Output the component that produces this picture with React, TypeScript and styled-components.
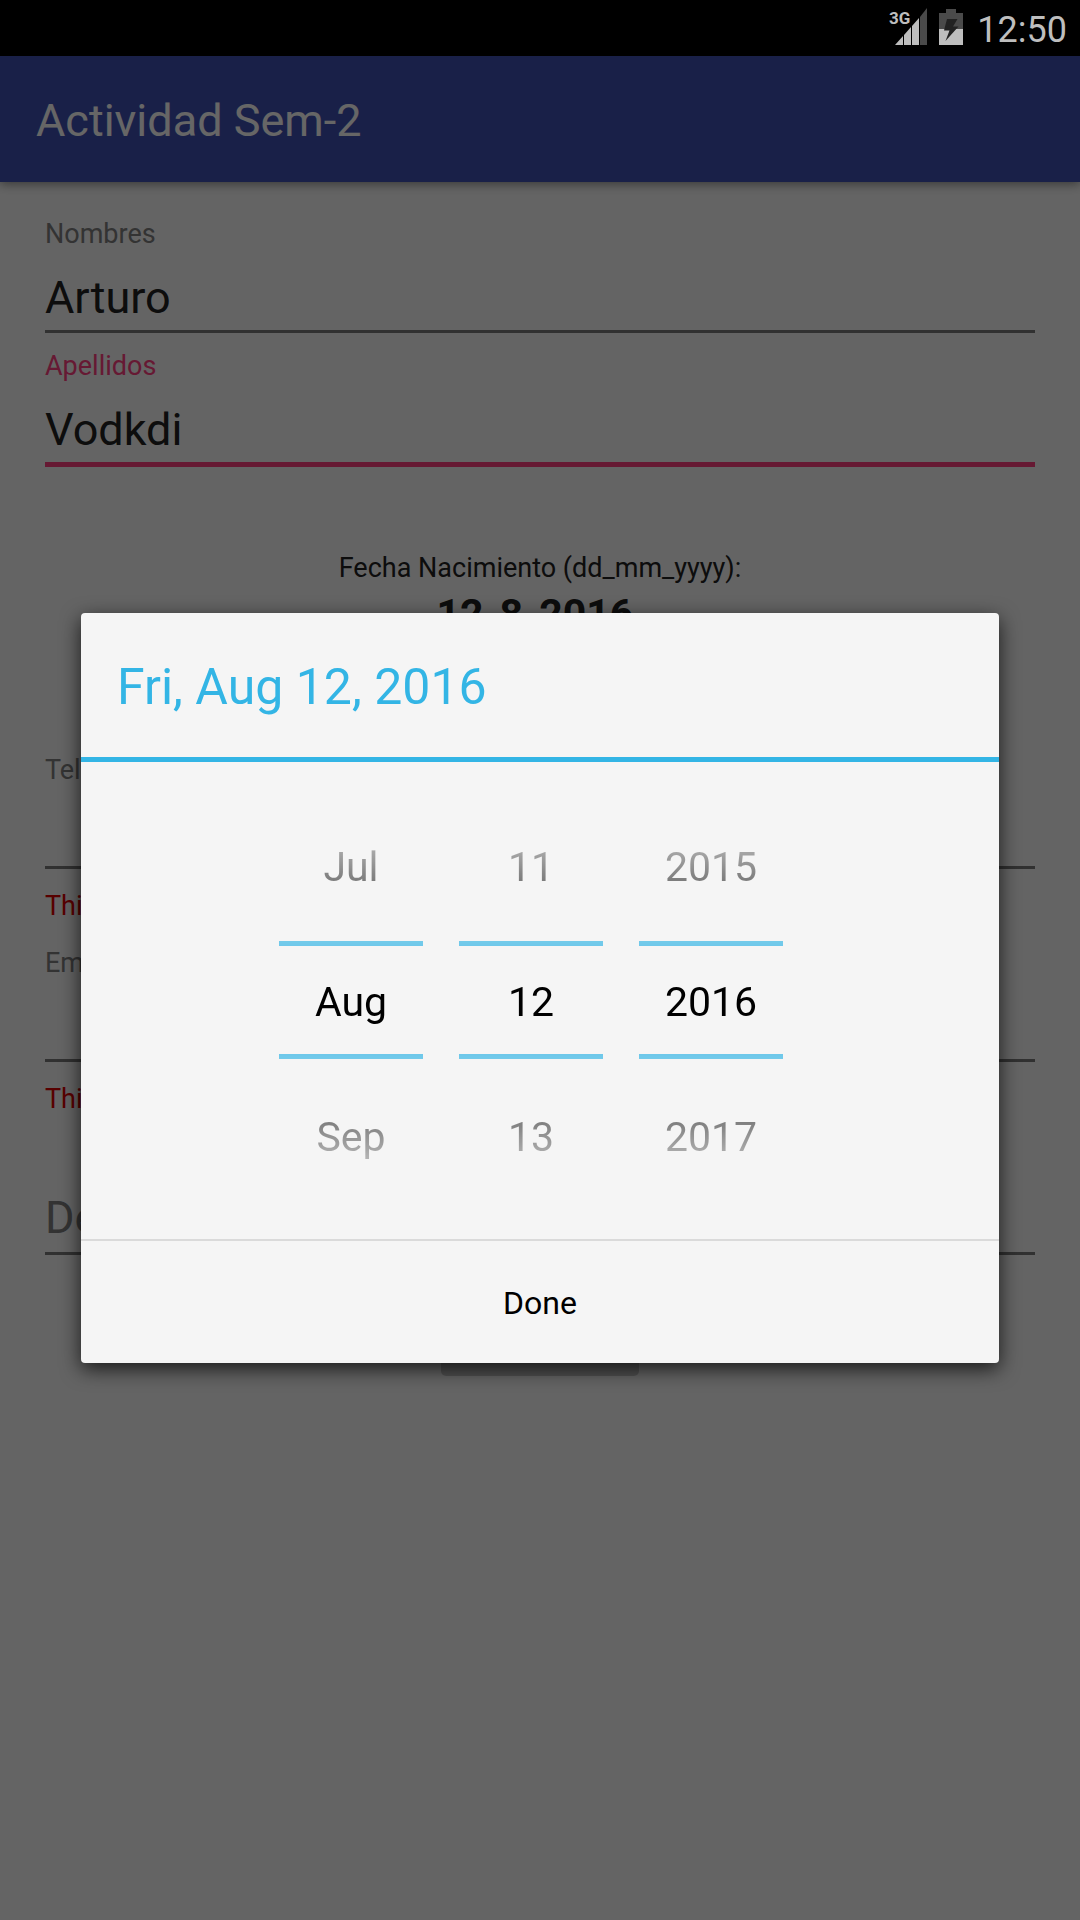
import React, { useState } from "react";
import styled, { createGlobalStyle } from "styled-components";

const GlobalStyle = createGlobalStyle`
  *, *::before, *::after { box-sizing: border-box; }
  body {
    margin: 0;
    background: #fafafa;
    font-family: Roboto, "Noto Sans", sans-serif;
  }
  input, button { font: inherit; }
`;

const Screen = styled.div`
  position: relative;
  display: flex;
  flex-direction: column;
  min-height: 100vh;
  background: #fafafa;
`;

const StatusBar = styled.header`
  display: flex;
  align-items: center;
  justify-content: flex-end;
  height: 56px;
  padding: 0 13px;
  background: #000;
  color: #bebebe;
  font-size: 36px;
`;

const StatusIcon = styled.svg`
  display: block;
  flex: none;
  height: 56px;
  margin-right: 12px;
`;

const Clock = styled.time`
  margin-left: 2px;
  padding-top: 4px;
  line-height: 52px;
`;

const Window = styled.div`
  position: relative;
  flex: 1;
  display: flex;
  flex-direction: column;
`;

const AppBar = styled.div`
  display: flex;
  align-items: center;
  height: 126px;
  padding: 3px 36px 0;
  background: #3f51b5;
  box-shadow: 0 2px 10px rgba(0, 0, 0, 0.45);
`;

const AppTitle = styled.h1`
  margin: 0;
  color: #fff;
  font-size: 45px;
  font-weight: 400;
  line-height: 56px;
`;

const Form = styled.form`
  display: flex;
  flex-direction: column;
  padding: 35px 45px;
`;

const Field = styled.div<{ $unlabelled?: boolean }>`
  display: flex;
  flex-direction: column;
  margin-bottom: 16px;
  padding-top: ${(p) => (p.$unlabelled ? 34 : 0)}px;
`;

const Label = styled.label<{ $active?: boolean }>`
  color: ${(p) => (p.$active ? "#ff4081" : "#808080")};
  font-size: 27px;
  line-height: 34px;
`;

const TextInput = styled.input<{ $active?: boolean }>`
  width: 100%;
  height: ${(p) => (p.$active ? 84 : 82)}px;
  padding: 14px 0 0;
  border: 0;
  border-bottom: ${(p) => (p.$active ? "5px solid #ff4081" : "3px solid #7a7a7a")};
  border-radius: 0;
  outline: 0;
  background: transparent;
  color: #212121;
  font-size: 45px;

  &::placeholder { color: #808080; opacity: 1; }
  &:placeholder-shown { padding: 9px 0 0; }
`;

const FieldError = styled.p`
  margin: 20px 0 7px;
  color: #dd0000;
  font-size: 27px;
  line-height: 34px;
`;

const BirthDate = styled.div`
  display: flex;
  flex-direction: column;
  align-items: center;
  gap: 5px;
  padding: 68px 0 115px;
  color: #212121;
`;

const BirthLabel = styled.span`
  font-size: 27px;
  line-height: 34px;
`;

const BirthValue = styled.strong`
  font-size: 41px;
  line-height: 48px;
  white-space: pre;
`;

const SubmitButton = styled.button`
  align-self: center;
  width: 198px;
  height: 100px;
  margin-top: 5px;
  border: 0;
  border-radius: 5px;
  background: #c8c9c9;
`;

const Scrim = styled.div`
  position: absolute;
  inset: 0;
  display: flex;
  align-items: center;
  justify-content: center;
  padding: 0 81px;
  background: rgba(0, 0, 0, 0.6);
`;

const Dialog = styled.section`
  flex: 1;
  overflow: hidden;
  border-radius: 4px;
  background: #f5f5f5;
  box-shadow: 0 6px 20px rgba(0, 0, 0, 0.75);
`;

const DialogTitle = styled.h2`
  margin: 0;
  padding: 42px 36px 38px;
  border-bottom: 5px solid #33b5e5;
  color: #33b5e5;
  font-size: 50px;
  font-weight: 400;
  line-height: 64px;
`;

const Pickers = styled.div`
  display: flex;
  justify-content: center;
  gap: 36px;
  padding: 36px 18px 36px 0;
`;

const Picker = styled.div`
  display: flex;
  flex-direction: column;
  width: 144px;
  font-size: 41px;
  mask-image: linear-gradient(
    transparent,
    #000 168px,
    #000 calc(100% - 168px),
    transparent
  );
`;

const Step = styled.button<{ $after?: boolean }>`
  height: ${(p) => (p.$after ? 144 : 143)}px;
  padding: ${(p) => (p.$after ? "12px 0 0" : "0 0 6px")};
  border: 0;
  background: none;
  color: #000;
`;

const PickerValue = styled.input`
  width: 100%;
  height: 118px;
  padding: 4px 0 0;
  border: solid #5cc2e8;
  border-width: 5px 0;
  outline: 0;
  background: transparent;
  color: #000;
  text-align: center;
`;

const DoneButton = styled.button`
  display: block;
  width: 100%;
  height: 124px;
  padding: 2px 0 0;
  border: 0;
  border-top: 2px solid #dadada;
  background: none;
  color: #000;
  font-size: 32px;
`;

const MONTHS = ["Jan", "Feb", "Mar", "Apr", "May", "Jun", "Jul", "Aug", "Sep", "Oct", "Nov", "Dec"];

const NetworkLabel = styled.text`
  fill: #bebebe;
  font-size: 17px;
  font-weight: 700;
`;

function SignalIcon() {
  return (
    <StatusIcon width="38" viewBox="0 0 38 56" role="img" aria-label="3G signal">
      <path d="M6 45 L14 36 V45 Z M15 35 L22 27 V45 H15 Z M23 26 L30 18 V45 H23 Z" fill="#bebebe" />
      <path d="M31 17 L38 8 V45 H31 Z" fill="#4a4a4a" />
      <NetworkLabel x="0" y="24">3G</NetworkLabel>
    </StatusIcon>
  );
}

function BatteryIcon() {
  return (
    <StatusIcon width="24" viewBox="0 0 24 56" role="img" aria-label="Battery charging">
      <path d="M7 9 H17 V13 H24 V29 H0 V13 H7 Z" fill="#4a4a4a" />
      <path d="M0 29 H24 V45 H0 Z" fill="#bebebe" />
      <path d="M8 19 H18.500 L14 26.500 H19.500 L6.500 41 L10.500 30.500 H5 Z" fill="#222" />
    </StatusIcon>
  );
}

interface NumberPickerProps {
  name: string;
  value: number;
  format?: (n: number) => string;
  onChange: (n: number) => void;
}

function NumberPicker({ name, value, format = String, onChange }: NumberPickerProps) {
  return (
    <Picker>
      <Step type="button" onClick={() => onChange(value - 1)}>{format(value - 1)}</Step>
      <PickerValue aria-label={name} value={format(value)} readOnly />
      <Step type="button" $after onClick={() => onChange(value + 1)}>{format(value + 1)}</Step>
    </Picker>
  );
}

export default function App() {
  const [month, setMonth] = useState(7);
  const [day, setDay] = useState(12);
  const [year, setYear] = useState(2016);
  const monthName = (n: number) => MONTHS[(n + 12) % 12];
  const weekday = new Date(year, month, day).toLocaleDateString("en-US", { weekday: "short" });

  return (
    <Screen>
      <GlobalStyle />
      <StatusBar>
        <SignalIcon />
        <BatteryIcon />
        <Clock>12:50</Clock>
      </StatusBar>
      <Window>
        <AppBar>
          <AppTitle>Actividad Sem-2</AppTitle>
        </AppBar>
        <Form>
          <Field>
            <Label htmlFor="nombres">Nombres</Label>
            <TextInput id="nombres" defaultValue="Arturo" />
          </Field>
          <Field>
            <Label htmlFor="apellidos" $active>Apellidos</Label>
            <TextInput id="apellidos" $active defaultValue="Vodkdi" />
          </Field>
          <BirthDate>
            <BirthLabel>Fecha Nacimiento (dd_mm_yyyy):</BirthLabel>
            <BirthValue>{"12-8-2016 "}</BirthValue>
          </BirthDate>
          <Field>
            <Label htmlFor="tel">Tel</Label>
            <TextInput id="tel" />
            <FieldError>This field</FieldError>
          </Field>
          <Field>
            <Label htmlFor="email">Email</Label>
            <TextInput id="email" />
            <FieldError>This field</FieldError>
          </Field>
          <Field $unlabelled>
            <TextInput aria-label="Descripción" placeholder="Descripción" />
          </Field>
          <SubmitButton type="button" aria-label="Siguiente" />
        </Form>
        <Scrim>
          <Dialog role="dialog" aria-labelledby="dialog-title">
            <DialogTitle id="dialog-title">
              {`${weekday}, ${monthName(month)} ${day}, ${year}`}
            </DialogTitle>
            <Pickers>
              <NumberPicker name="Month" value={month} format={monthName} onChange={(n) => setMonth((n + 12) % 12)} />
              <NumberPicker name="Day" value={day} onChange={setDay} />
              <NumberPicker name="Year" value={year} onChange={setYear} />
            </Pickers>
            <DoneButton type="button">Done</DoneButton>
          </Dialog>
        </Scrim>
      </Window>
    </Screen>
  );
}
